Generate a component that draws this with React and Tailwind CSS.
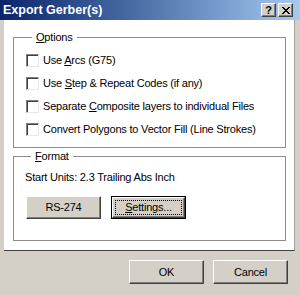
export default function App() {
  const raised =
    "bg-[#d4d0c8] border border-t-white border-l-white border-b-[#404040] border-r-[#404040] shadow-[inset_-1px_-1px_0_#808080]";
  const Check = ({ children }) => (
    <div className="flex items-center h-[23px]">
      <div className="w-[13px] h-[13px] bg-white border border-t-[#808080] border-l-[#808080] border-b-[#e8e8e8] border-r-[#e8e8e8] shadow-[inset_1px_1px_0_#404040]" />
      <span className="ml-[4px]">{children}</span>
    </div>
  );
  return (
    <div className="w-[300px] h-[295px] bg-[#d4d0c8] flex flex-col font-['Liberation_Sans',sans-serif] text-[11px] tracking-[-0.2px] text-black leading-none select-none">
      {/* title bar */}
      <div className="h-[20px] flex items-center bg-gradient-to-r from-[#0a246a] to-[#a6caf0] pl-[3px] pr-[7px]">
        <span className="text-white font-bold text-[12.5px] tracking-normal">Export Gerber(s)</span>
        <div className="ml-auto flex gap-[2px]">
          <div className={`w-[15px] h-[14px] flex items-center justify-center ${raised}`}>
            <span className="font-bold text-[11px] leading-none">?</span>
          </div>
          <div className={`w-[15px] h-[14px] flex items-center justify-center ${raised}`}>
            <svg width="8" height="7" viewBox="0 0 8 7">
              <path d="M0 0 L7 7 M1 0 L8 7 M7 0 L0 7 M8 0 L1 7" stroke="#000" strokeWidth="1" />
            </svg>
          </div>
        </div>
      </div>
      {/* body */}
      <div className="flex pl-[4px] pr-[5px]">
        <div className="w-[291px] h-[231px] bg-white border-r border-r-[#a0a0a0] border-b border-b-[#404040] pt-[12px] pl-[9px] pr-[8px]">
          <fieldset className="border border-[#8c8c8c] pl-[12px] pb-[7px] h-[116px]">
            <legend className="ml-[6px] px-[4px]">
              <span className="underline">O</span>ptions
            </legend>
            <div className="pt-[6px]">
              <Check>
                Use <span className="underline">A</span>rcs (G75)
              </Check>
              <Check>
                Use <span className="underline">S</span>tep &amp; Repeat Codes (if any)
              </Check>
              <Check>
                Separate <span className="underline">C</span>omposite layers to individual Files
              </Check>
              <Check>Convert Polygons to Vector Fill (Line Strokes)</Check>
            </div>
          </fieldset>
          <fieldset className="border border-[#8c8c8c] pl-[11px] mt-[3px] h-[90px]">
            <legend className="ml-[6px] px-[4px]">
              <span className="underline">F</span>ormat
            </legend>
            <div className="pt-[10px]">Start Units: 2.3 Trailing Abs Inch</div>
            <div className="flex gap-[10px] mt-[13px] ml-[1px]">
              <div className={`w-[75px] h-[23px] flex items-center justify-center ${raised}`}>RS-274</div>
              <div className="w-[75px] h-[23px] border border-black">
                <div className={`w-full h-full flex items-center justify-center p-[2px] ${raised}`}>
                  <div className="w-full h-full border border-dotted border-black flex items-center justify-center">
                    <span>
                      <span className="underline">S</span>ettings...
                    </span>
                  </div>
                </div>
              </div>
            </div>
          </fieldset>
        </div>
      </div>
      {/* footer */}
      <div className="flex-1 flex justify-end items-start gap-[9px] pt-[9px] pr-[12px]">
        <div className={`w-[75px] h-[24px] flex items-center justify-center ${raised}`}>OK</div>
        <div className={`w-[75px] h-[24px] flex items-center justify-center ${raised}`}>Cancel</div>
      </div>
    </div>
  );
}
